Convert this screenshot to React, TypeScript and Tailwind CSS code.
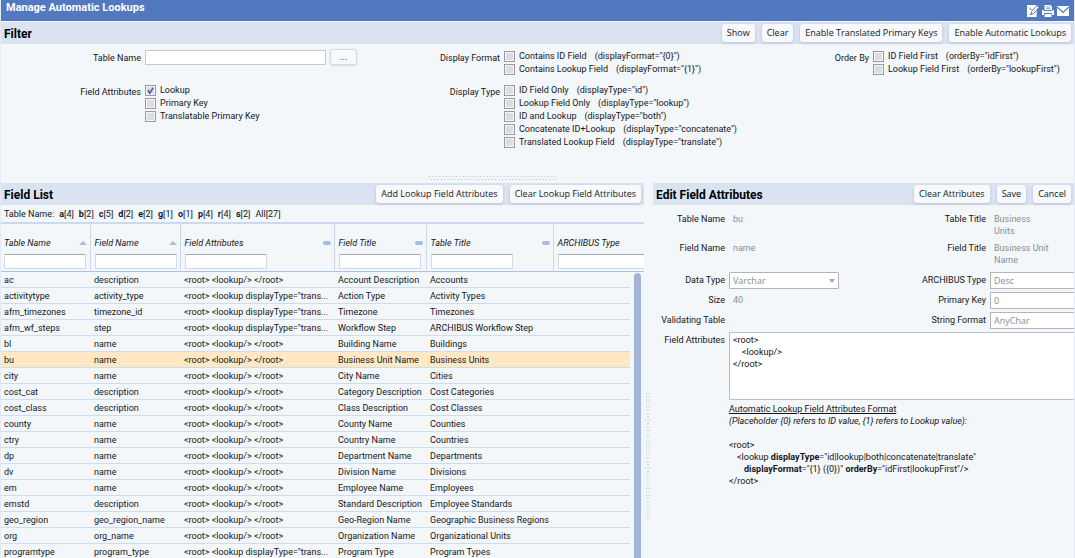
import type { ReactNode } from "react";

const INK = "text-[#14161a]";

function ToolButton({ children }: { children: ReactNode }) {
  return (
    <button
      type="button"
      className="h-[18px] whitespace-nowrap rounded-[3px] bg-[#f7f9fd] px-[5px] font-['Open_Sans',sans-serif] text-[9px] leading-4 text-[#14161a] shadow-[0_1px_3px_#b4bfd2]"
    >
      {children}
    </button>
  );
}

function PanelBar({ title, children }: { title: string; children: ReactNode }) {
  return (
    <div className="flex h-[22px] shrink-0 items-center bg-[#dae3f2] pl-[3px] pr-[3px]">
      <h2 className="grow whitespace-nowrap pt-px text-[12px] font-bold leading-4 text-black">{title}</h2>
      <div className="flex gap-[7px]">{children}</div>
    </div>
  );
}

function Check({ label, note, checked }: { label: string; note?: string; checked?: boolean }) {
  return (
    <label className="flex h-[13px] items-start whitespace-nowrap">
      <span className="relative mt-px mr-1 h-[11px] w-[11px] shrink-0">
        <input
          type="checkbox"
          defaultChecked={checked}
          className="peer block h-[11px] w-[11px] appearance-none border border-[#9a9a9a] bg-[#dcdde2] shadow-[inset_0_0_0_1px_#f6f6f6]"
        />
        <svg viewBox="0 0 11 11" className="pointer-events-none absolute inset-0 hidden h-[11px] w-[11px] peer-checked:block">
          <path d="M3 5.2 4.8 8.2 8.2 2.6" fill="none" stroke="#4565a8" strokeWidth="1.7" />
        </svg>
      </span>
      <span className="leading-3">{label}</span>
      {note && <span className="ml-2 leading-3">({note})</span>}
    </label>
  );
}

function CheckGroup({ title, children }: { title: string; children: ReactNode }) {
  return (
    <fieldset className="flex gap-1" aria-label={title}>
      <span className="w-[140px] shrink-0 pt-px text-right leading-[14px]">{title}</span>
      <div>{children}</div>
    </fieldset>
  );
}

const lookup = "<root> <lookup/> </root>";
const translated = '<root> <lookup displayType="trans...';

const rows: [string, string, string, string, string][] = [
  ["ac", "description", lookup, "Account Description", "Accounts"],
  ["activitytype", "activity_type", translated, "Action Type", "Activity Types"],
  ["afm_timezones", "timezone_id", translated, "Timezone", "Timezones"],
  ["afm_wf_steps", "step", translated, "Workflow Step", "ARCHIBUS Workflow Step"],
  ["bl", "name", lookup, "Building Name", "Buildings"],
  ["bu", "name", lookup, "Business Unit Name", "Business Units"],
  ["city", "name", lookup, "City Name", "Cities"],
  ["cost_cat", "description", lookup, "Category Description", "Cost Categories"],
  ["cost_class", "description", lookup, "Class Description", "Cost Classes"],
  ["county", "name", lookup, "County Name", "Counties"],
  ["ctry", "name", lookup, "Country Name", "Countries"],
  ["dp", "name", lookup, "Department Name", "Departments"],
  ["dv", "name", lookup, "Division Name", "Divisions"],
  ["em", "name", lookup, "Employee Name", "Employees"],
  ["emstd", "description", lookup, "Standard Description", "Employee Standards"],
  ["geo_region", "geo_region_name", lookup, "Geo-Region Name", "Geographic Business Regions"],
  ["org", "org_name", lookup, "Organization Name", "Organizational Units"],
  ["programtype", "program_type", translated, "Program Type", "Program Types"],
];

const columns = [
  { title: "Table Name", mark: "sort" },
  { title: "Field Name", mark: "sort" },
  { title: "Field Attributes", mark: "bar" },
  { title: "Field Title", mark: "bar" },
  { title: "Table Title", mark: "bar" },
  { title: "ARCHIBUS Type", mark: "none" },
];

const letters: [string, number][] = [
  ["a", 4], ["b", 2], ["c", 5], ["d", 2], ["e", 2], ["g", 1], ["o", 1], ["p", 4], ["r", 4], ["s", 2],
];

function ColumnMark({ kind }: { kind: string }) {
  if (kind === "sort")
    return (
      <svg viewBox="0 0 8 4" className="h-1 w-2">
        <path d="M0 4 4 0 8 4Z" fill="#a9bcdc" />
      </svg>
    );
  if (kind === "bar") return <span className="h-1 w-2 rounded-[2px] bg-[#a9bcdc]" />;
  return null;
}

function Grid() {
  return (
    <div className="relative min-h-0 grow overflow-hidden border-t-2 border-[#cbdaf0]">
      <table className="w-full table-fixed border-collapse">
        <colgroup>
          <col className="w-[89px]" />
          <col className="w-[90px]" />
          <col className="w-[154px]" />
          <col className="w-[92px]" />
          <col className="w-[127px]" />
          <col />
          <col className="w-[14px]" />
        </colgroup>
        <thead>
          <tr className="h-[47px] border-b border-[#aac1e2]">
            {columns.map((c, i) => (
              <th
                key={c.title}
                colSpan={i === 5 ? 2 : 1}
                className="overflow-hidden border-l border-[#cbd7ea] pl-1 text-left align-bottom font-normal italic first:border-l-0 first:pl-[3px]"
              >
                <div className="mb-[5px] flex items-center justify-between whitespace-nowrap pr-[3px] leading-3">
                  {c.title}
                  <ColumnMark kind={c.mark} />
                </div>
                <input
                  aria-label={`Filter by ${c.title}`}
                  className={`mb-[2px] block h-[15px] rounded-[1px] border border-[#d5dae2] border-t-[#a5a9b0] bg-white px-1 ${i === 5 ? "w-[120px]" : "w-[82px]"}`}
                />
              </th>
            ))}
          </tr>
        </thead>
        <tbody>
          {rows.map((r) => (
            <tr key={r[0]} className="h-4">
              {[...r, ""].map((cell, i) => (
                <td
                  key={i}
                  className={`whitespace-nowrap border-b border-[#cfdcef] pl-1 pt-px leading-[14px] first:pl-[3px] ${r[0] === "bu" ? "bg-[#ffe8c3]" : ""}`}
                >
                  {cell}
                </td>
              ))}
            </tr>
          ))}
        </tbody>
      </table>
      <div className="absolute right-[3px] top-[49px] h-[560px] w-[7px] rounded-full bg-[#a3b5d5]" />
    </div>
  );
}

function DotsAcross() {
  return (
    <svg className="h-[5px] w-[128px]" aria-hidden="true">
      <defs>
        <pattern id="dots-across" width="3.4" height="5" patternUnits="userSpaceOnUse">
          <rect x="0" y="0" width="1" height="1" fill="#b9bdc4" />
          <rect x="1.5" y="3" width="1" height="1" fill="#b9bdc4" />
        </pattern>
      </defs>
      <rect width="128" height="5" fill="url(#dots-across)" />
    </svg>
  );
}

function DotsDown() {
  return (
    <svg className="h-[128px] w-[5px]" aria-hidden="true">
      <defs>
        <pattern id="dots-down" width="5" height="6.8" patternUnits="userSpaceOnUse">
          <rect x="0" y="0" width="1" height="1" fill="#b9bdc4" />
          <rect x="3" y="0" width="1" height="1" fill="#b9bdc4" />
          <rect x="1" y="3" width="2" height="1" fill="#c3c7cd" />
        </pattern>
      </defs>
      <rect width="5" height="128" fill="url(#dots-down)" />
    </svg>
  );
}

function FormLabel({ children, htmlFor }: { children: ReactNode; htmlFor?: string }) {
  return (
    <label htmlFor={htmlFor} className="whitespace-nowrap pt-[2px] text-right leading-3">
      {children}
    </label>
  );
}

function Value({ children }: { children?: ReactNode }) {
  return <div className="max-w-[62px] pl-1 pt-[2px] leading-3 text-[#8b8e93]">{children}</div>;
}

const box =
  "h-[17px] border border-[#b3b5bb] bg-white pl-[3px] font-['Open_Sans',sans-serif] text-[9px] text-[#8b8e93]";

function EditForm() {
  return (
    <form className="grid grid-cols-[72px_minmax(0,1fr)_80px_84px] gap-x-1 gap-y-[3px] overflow-hidden pt-[6px]">
      <FormLabel>Table Name</FormLabel>
      <Value>bu</Value>
      <FormLabel>Table Title</FormLabel>
      <div className="h-[26px]">
        <Value>Business Units</Value>
      </div>
      <FormLabel>Field Name</FormLabel>
      <Value>name</Value>
      <FormLabel>Field Title</FormLabel>
      <div className="h-[29px]">
        <Value>Business Unit Name</Value>
      </div>
      <FormLabel htmlFor="data-type">Data Type</FormLabel>
      <div className="relative w-[110px]">
        <select id="data-type" className={`${box} block w-full appearance-none rounded-[1px]`}>
          <option>Varchar</option>
        </select>
        <svg viewBox="0 0 6 4" className="pointer-events-none absolute right-1 top-[7px] h-1 w-[6px]">
          <path d="M0 0H6L3 4Z" fill="#a5a7ab" />
        </svg>
      </div>
      <FormLabel htmlFor="archibus-type">ARCHIBUS Type</FormLabel>
      <input id="archibus-type" defaultValue="Desc" className={`${box} w-[110px]`} />
      <FormLabel>Size</FormLabel>
      <Value>40</Value>
      <FormLabel htmlFor="primary-key">Primary Key</FormLabel>
      <input id="primary-key" defaultValue="0" className={`${box} w-[110px]`} />
      <FormLabel>Validating Table</FormLabel>
      <Value />
      <FormLabel htmlFor="string-format">String Format</FormLabel>
      <input id="string-format" defaultValue="AnyChar" className={`${box} w-[110px]`} />
      <FormLabel htmlFor="attributes">Field Attributes</FormLabel>
      <textarea
        id="attributes"
        defaultValue={"<root>\n    <lookup/>\n</root>"}
        className="col-span-3 block h-[68px] w-[360px] resize-none border border-[#bcbed0] bg-white px-[3px] py-px leading-3"
      />
      <div className="col-span-3 col-start-2 whitespace-nowrap leading-3">
        <p className="underline">Automatic Lookup Field Attributes Format</p>
        <p className="italic">{"(Placeholder {0} refers to ID value, {1} refers to Lookup value):"}</p>
        <p className="pt-3">{"<root>"}</p>
        <p className="pl-2">
          {"<lookup "}
          <b>displayType</b>
          {'="id|lookup|both|concatenate|translate"'}
        </p>
        <p className="pl-[15px]">
          <b>displayFormat</b>
          {'="{1} ({0})" '}
          <b>orderBy</b>
          {'="idFirst|lookupFirst"/>'}
        </p>
        <p>{"</root>"}</p>
      </div>
    </form>
  );
}

export default function App() {
  return (
    <main
      className={`flex h-screen flex-col overflow-hidden border-x border-[#e2ebf7] bg-[#f3f7fa] font-['Roboto',sans-serif] text-[9px] ${INK}`}
    >
      <header className="flex h-[21px] shrink-0 items-center justify-between bg-[#5278c0] pl-[5px] pr-[5px]">
        <h1 className="pb-[6px] text-[11px] font-bold leading-[15px] text-white">Manage Automatic Lookups</h1>
        <div className="flex gap-[3px]">
          <button type="button" aria-label="Edit">
            <svg viewBox="0 0 12 12" className="h-3 w-3">
              <path d="M0 0H9L10 2.5V12H0Z" fill="#fff" />
              <path d="M2 2.5 4.5 5M2.5 9.5 5 8.5" stroke="#5278c0" strokeWidth="1" />
              <path d="M4 9.3 4.6 6.4 10 .4 12 2.2 6.6 8.6Z" fill="#fff" stroke="#5278c0" strokeWidth="1" />
              <path d="M10 6V12" stroke="#5278c0" strokeWidth=".6" />
            </svg>
          </button>
          <button type="button" aria-label="Print">
            <svg viewBox="0 0 12 12" className="h-3 w-3">
              <path d="M2.5 0H8.5L10 1.5V5H2.5Z" fill="#fff" />
              <path d="M4 2H8M4 3.7H8.5" stroke="#5278c0" strokeWidth=".7" />
              <path d="M0 5H1.7V6H10.3V5H12V10H10V8H2V10H0Z" fill="#fff" />
              <path d="M2.5 9H9.5V12H2.5Z" fill="#fff" />
            </svg>
          </button>
          <button type="button" aria-label="Mail">
            <svg viewBox="0 0 12 10" className="h-[10px] w-3">
              <path d="M0 0H12V10H0Z" fill="#fff" />
              <path d="M.3 1.2 6 6.4 11.7 1.2" fill="none" stroke="#5278c0" strokeWidth="1.3" />
            </svg>
          </button>
        </div>
      </header>

      <section className="mt-px shrink-0">
        <PanelBar title="Filter">
          <ToolButton>Show</ToolButton>
          <ToolButton>Clear</ToolButton>
          <ToolButton>Enable Translated Primary Keys</ToolButton>
          <ToolButton>Enable Automatic Lookups</ToolButton>
        </PanelBar>
        <div className="grid h-[130px] grid-cols-[minmax(0,359fr)_minmax(0,369fr)_minmax(0,345fr)] pt-[6px]">
          <div>
            <div className="flex h-[34px] items-start gap-1">
              <label htmlFor="table-name" className="w-[140px] pt-px text-right leading-[14px]">
                Table Name
              </label>
              <input id="table-name" className="h-[15px] w-[181px] border border-[#c3c8db] bg-white px-1" />
              <button
                type="button"
                aria-label="Select table"
                className="-mt-px h-4 w-[27px] rounded-[3px] border border-[#d3dae8] bg-[#f7f9fd] leading-[13px] shadow-[0_1px_2px_#d3dae8]"
              >
                ...
              </button>
            </div>
            <CheckGroup title="Field Attributes">
              <Check label="Lookup" checked />
              <Check label="Primary Key" />
              <Check label="Translatable Primary Key" />
            </CheckGroup>
          </div>
          <div>
            <div className="h-[34px]">
              <CheckGroup title="Display Format">
                <Check label="Contains ID Field" note={'displayFormat="{0}"'} />
                <Check label="Contains Lookup Field" note={'displayFormat="{1}"'} />
              </CheckGroup>
            </div>
            <CheckGroup title="Display Type">
              <Check label="ID Field Only" note={'displayType="id"'} />
              <Check label="Lookup Field Only" note={'displayType="lookup"'} />
              <Check label="ID and Lookup" note={'displayType="both"'} />
              <Check label="Concatenate ID+Lookup" note={'displayType="concatenate"'} />
              <Check label="Translated Lookup Field" note={'displayType="translate"'} />
            </CheckGroup>
          </div>
          <CheckGroup title="Order By">
            <Check label="ID Field First" note={'orderBy="idFirst"'} />
            <Check label="Lookup Field First" note={'orderBy="lookupFirst"'} />
          </CheckGroup>
        </div>
        <div className="flex h-[9px] items-center justify-center pr-[90px]">
          <DotsAcross />
        </div>
      </section>

      <div className="grid min-h-0 grow grid-cols-[minmax(0,643fr)_9px_minmax(0,421fr)]">
        <section className="flex min-h-0 flex-col">
          <PanelBar title="Field List">
            <ToolButton>Add Lookup Field Attributes</ToolButton>
            <ToolButton>Clear Lookup Field Attributes</ToolButton>
          </PanelBar>
          <nav className="flex h-[17px] shrink-0 items-center gap-[5px] pl-[3px] leading-3">
            <span>Table Name:</span>
            {letters.map(([letter, count]) => (
              <a key={letter} href={`#${letter}`}>
                <b>{letter}</b>[{count}]
              </a>
            ))}
            <a href="#all">All[27]</a>
          </nav>
          <Grid />
        </section>
        <div className="flex items-center justify-center pt-[183px] pb-[10px]">
          <DotsDown />
        </div>
        <section className="min-h-0 overflow-hidden">
          <PanelBar title="Edit Field Attributes">
            <ToolButton>Clear Attributes</ToolButton>
            <ToolButton>Save</ToolButton>
            <ToolButton>Cancel</ToolButton>
          </PanelBar>
          <EditForm />
        </section>
      </div>
    </main>
  );
}
